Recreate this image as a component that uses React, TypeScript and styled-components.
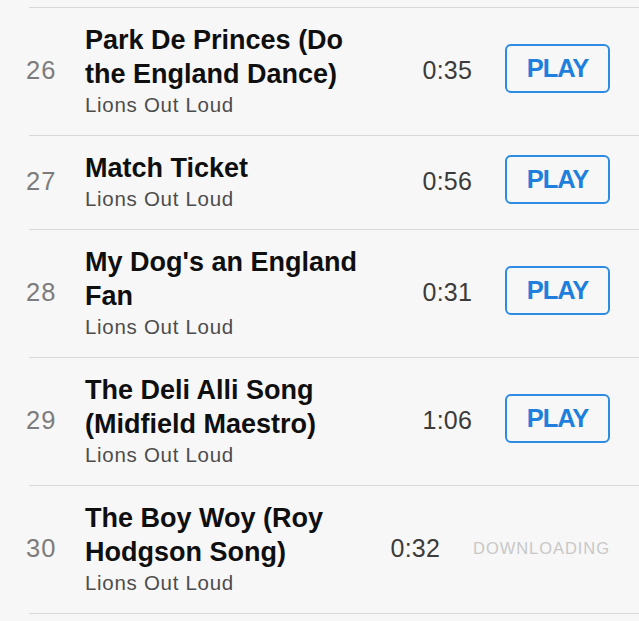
import React from "react";
import styled, { createGlobalStyle } from "styled-components";

const GlobalStyle = createGlobalStyle`
  html, body {
    margin: 0;
    padding: 0;
    background: #f7f7f7;
  }
  body {
    font-family: "Liberation Sans", Arial, sans-serif;
    -webkit-font-smoothing: antialiased;
  }
`;

const Page = styled.div`
  width: 639px;
  height: 621px;
  overflow: hidden;
  background: #f7f7f7;
  padding-top: 7px;
  box-sizing: border-box;
`;

const List = styled.ul`
  list-style: none;
  margin: 0 0 0 29px;
  padding: 0;
  border-top: 1px solid #d9d9d9;
`;

const Row = styled.li`
  display: flex;
  align-items: center;
  padding: 15px 29px 18px 0;
  border-bottom: 1px solid #d9d9d9;
`;

const TrackNo = styled.div`
  width: 59px;
  margin-left: -3px;
  flex: none;
  font-size: 25.5px;
  letter-spacing: 1px;
  color: #7c7c7c;
  line-height: 30px;
`;

const Info = styled.div`
  flex: 1 1 auto;
  min-width: 0;
  max-width: 292px;
`;

const Title = styled.div`
  font-size: 27px;
  font-weight: bold;
  line-height: 34px;
  letter-spacing: 0;
  color: #0f0f0f;
`;

const Artist = styled.div`
  margin-top: 1px;
  font-size: 20.5px;
  line-height: 25px;
  letter-spacing: 0.7px;
  color: #4d4d4d;
`;

const Duration = styled.div`
  margin-left: auto;
  flex: none;
  font-size: 25px;
  letter-spacing: 0.2px;
  color: #3b3b3b;
  line-height: 30px;
`;

const PlayButton = styled.button`
  flex: none;
  margin-left: 33px;
  margin-bottom: 3px;
  width: 105px;
  height: 49px;
  box-sizing: border-box;
  border: 2px solid #2d8be2;
  border-radius: 6px;
  background: transparent;
  color: #1f7fdc;
  font-family: "Liberation Sans", Arial, sans-serif;
  font-weight: bold;
  font-size: 25.5px;
  letter-spacing: -1px;
  padding: 0;
  display: flex;
  align-items: center;
  justify-content: center;
`;

const Status = styled.div`
  flex: none;
  margin-left: 33px;
  font-size: 16.5px;
  letter-spacing: 0.95px;
  color: #c8c8c8;
  line-height: 20px;
`;

type Track = {
  no: number;
  title: string;
  artist: string;
  duration: string;
  downloading?: boolean;
};

const tracks: Track[] = [
  { no: 26, title: "Park De Princes (Do the England Dance)", artist: "Lions Out Loud", duration: "0:35" },
  { no: 27, title: "Match Ticket", artist: "Lions Out Loud", duration: "0:56" },
  { no: 28, title: "My Dog's an England Fan", artist: "Lions Out Loud", duration: "0:31" },
  { no: 29, title: "The Deli Alli Song (Midfield Maestro)", artist: "Lions Out Loud", duration: "1:06" },
  { no: 30, title: "The Boy Woy (Roy Hodgson Song)", artist: "Lions Out Loud", duration: "0:32", downloading: true },
];

export default function App() {
  return (
    <Page>
      <GlobalStyle />
      <List>
        {tracks.map((t) => (
          <Row key={t.no}>
            <TrackNo>{t.no}</TrackNo>
            <Info>
              <Title>{t.title}</Title>
              <Artist>{t.artist}</Artist>
            </Info>
            <Duration>{t.duration}</Duration>
            {t.downloading ? <Status>DOWNLOADING</Status> : <PlayButton>PLAY</PlayButton>}
          </Row>
        ))}
      </List>
    </Page>
  );
}
